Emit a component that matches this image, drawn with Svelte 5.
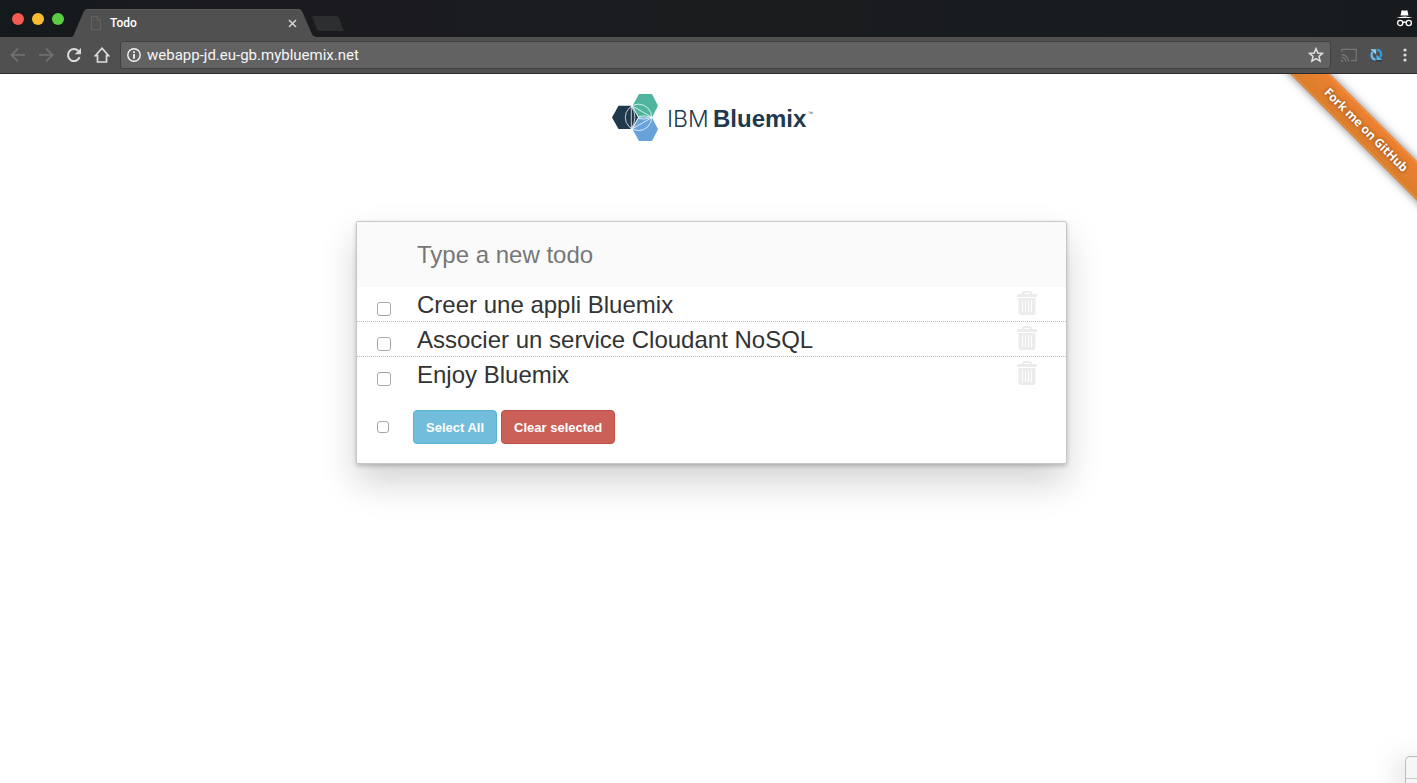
<script>
  let draft = $state('');
  let todos = $state([
    { id: 1, text: 'Creer une appli Bluemix', done: false },
    { id: 2, text: 'Associer un service Cloudant NoSQL', done: false },
    { id: 3, text: 'Enjoy Bluemix', done: false }
  ]);
  let nextId = 4;

  function add(event) {
    event.preventDefault();
    if (!draft.trim()) return;
    todos.push({ id: nextId++, text: draft.trim(), done: false });
    draft = '';
  }
  function remove(id) {
    todos = todos.filter((t) => t.id !== id);
  }
  function setAll(value) {
    todos.forEach((t) => (t.done = value));
  }
  function clearSelected() {
    todos = todos.filter((t) => !t.done);
  }
</script>

<div class="browser">
  <header class="titlebar">
    <div class="lights">
      <button class="light close" aria-label="Close window"></button>
      <button class="light minimise" aria-label="Minimise window"></button>
      <button class="light expand" aria-label="Zoom window"></button>
    </div>
    <div class="tab">
      <svg class="tab-shape" viewBox="0 0 244 28" preserveAspectRatio="none" aria-hidden="true">
        <path d="M0 28C2 28 2 26 3 24L12 3Q13 0 15 0H226Q229 0 230 3L239 24C240 26 241 28 244 28Z" fill="#505050" />
        <path d="M0 28C2 28 2 26 3 24L12 3Q13 .5 15 .5H226Q229 .5 230 3L239 24C240 26 241 28 244 28" fill="none" stroke="#606060" stroke-width=".6" />
      </svg>
      <svg class="page-icon" viewBox="0 0 10 14" aria-hidden="true">
        <path d="M.5.5H6L9.500 4V13.500H.5ZM6 .5V4H9.500" fill="none" stroke="#636363" />
      </svg>
      <span class="tab-title">Todo</span>
      <button class="tab-close" aria-label="Close tab">
        <svg viewBox="0 0 9 9" aria-hidden="true"><path d="M1 1L8 8M8 1L1 8" stroke="#d4d4d4" stroke-width="1.500" /></svg>
      </button>
    </div>
    <button class="new-tab" aria-label="New tab">
      <svg viewBox="0 0 32 15" aria-hidden="true"><path d="M1 0H24Q26 0 27 2L32 15H8Q6 15 5 13L0 1Z" fill="#2d2e30" /></svg>
    </button>
    <svg class="incognito" viewBox="0 0 17 18" aria-hidden="true">
      <path d="M4.500 5.500L5.500.8Q5.700 0 6.500.3L8.500.8 10.500.3Q11.300 0 11.500.8L12.500 5.500ZM.2 8Q8.500 5 16.800 8Z" fill="#fff" />
      <g fill="none" stroke="#fff" stroke-width="1.300">
        <circle cx="4.200" cy="13" r="2.600" />
        <circle cx="12.800" cy="13" r="2.600" />
        <path d="M6.800 12.600Q8.500 11.400 10.200 12.600" />
      </g>
    </svg>
  </header>

  <nav class="toolbar" aria-label="Browser">
    <button class="tool" aria-label="Back">
      <svg viewBox="0 0 16 16" aria-hidden="true"><path d="M15 8H2M8 1.500L1.500 8 8 14.500" fill="none" stroke="#737373" stroke-width="1.700" /></svg>
    </button>
    <button class="tool" aria-label="Forward">
      <svg viewBox="0 0 16 16" aria-hidden="true"><path d="M1 8H14M8 1.500L14.500 8 8 14.500" fill="none" stroke="#737373" stroke-width="1.700" /></svg>
    </button>
    <button class="tool" aria-label="Reload">
      <svg viewBox="0 0 16 16" aria-hidden="true">
        <path d="M13.600 10.200A6 6 0 1 1 12.300 3.900" fill="none" stroke="#dcdcdc" stroke-width="2" />
        <path d="M15 1V7.200H8.800Z" fill="#dcdcdc" />
      </svg>
    </button>
    <button class="tool" aria-label="Home">
      <svg viewBox="0 0 16 16" aria-hidden="true"><path d="M8 1.200L1.400 8.700H3.500V15H12.500V8.700H14.600Z" fill="none" stroke="#dcdcdc" stroke-width="1.700" /></svg>
    </button>
    <div class="omnibox">
      <svg class="info" viewBox="0 0 14 14" aria-hidden="true">
        <circle cx="7" cy="7" r="6.200" fill="none" stroke="#f4f4f4" stroke-width="1.400" />
        <path d="M6.100 6H7.900V10.700H6.100ZM6.100 3.200H7.900V4.900H6.100Z" fill="#f4f4f4" />
      </svg>
      <input class="address" type="text" aria-label="Address" value="webapp-jd.eu-gb.mybluemix.net" />
      <button class="star" aria-label="Bookmark this page">
        <svg viewBox="0 0 14 14" aria-hidden="true"><path d="M7 1.400L8.600 5.200 12.800 5.500 9.600 8.200 10.600 12.300 7 10.100 3.400 12.300 4.400 8.200 1.200 5.500 5.400 5.200Z" fill="none" stroke="#e2e2e2" stroke-width="1.300" /></svg>
      </button>
    </div>
    <button class="tool" aria-label="Cast">
      <svg viewBox="0 0 16 14" aria-hidden="true">
        <path d="M.8 4V1.300H15.200V12.700H10" fill="none" stroke="#757575" stroke-width="1.300" />
        <path d="M.5 6.500A7 7 0 0 1 7.500 13.500M.5 9.300A4.200 4.200 0 0 1 4.700 13.500" fill="none" stroke="#757575" stroke-width="1.300" />
        <path d="M0 11.500A2.300 2.300 0 0 1 2.300 13.800H0Z" fill="#757575" />
      </svg>
    </button>
    <button class="tool sync" aria-label="Sync extension">
      <svg viewBox="0 0 14 14" aria-hidden="true">
        <ellipse cx="8" cy="12.700" rx="5" ry=".9" fill="#363d43" />
        <path d="M6.500 11.800C2.800 10.800 1.300 7.200 3.500 4" fill="none" stroke="#62bdf0" stroke-width="2.300" />
        <path d="M1.300 1.300H7.200V6.500Q4.500 4.800 1.300 1.300Z" fill="#86cdf5" />
        <path d="M8.200 1.700C12 2.500 13.200 6 11.200 9.300" fill="none" stroke="#2f9be0" stroke-width="2.300" />
        <path d="M13 12H7.500V7Q10 8.500 13 12Z" fill="#4db6ef" />
      </svg>
    </button>
    <button class="tool menu" aria-label="Menu">
      <svg viewBox="0 0 4 14" aria-hidden="true"><g fill="#dcdcdc"><circle cx="2" cy="2" r="1.600" /><circle cx="2" cy="7" r="1.600" /><circle cx="2" cy="12" r="1.600" /></g></svg>
    </button>
  </nav>

  <main class="page">
    <div class="ribbon-corner">
      <a class="ribbon" href="#fork"><span>Fork me on GitHub</span></a>
    </div>

    <svg class="logo" viewBox="0 0 200 47" role="img" aria-label="IBM Bluemix">
      <path d="M27 0H40L46 11.700 40 23.400H27L20.500 11.700Z" fill="#4fb59f" />
      <path d="M27 23.400H40L46 35.200 40 47H27L20.500 35.200Z" fill="#68a2da" />
      <path d="M6.500 11.700H19.500L26 23.400 19.500 35H6.500L0 23.400Z" fill="#20384c" />
      <g fill="none" stroke="#fff" stroke-opacity=".75" stroke-width="1">
        <circle cx="26.500" cy="23.400" r="13.200" />
        <path d="M19.300 11.800V35M19.300 11.800Q26.500 23.400 19.300 35" />
        <path d="M20.300 12L39.600 23M26.500 22.500Q33 21 39.600 23.400" />
        <path d="M20.300 34.800L39.600 23.800M26.500 24.500Q33 26 39.600 23.400" />
      </g>
      <text class="mark-light" x="55" y="33">IBM</text>
      <text class="mark-bold" x="101" y="33">Bluemix</text>
      <text class="mark-tm" x="196" y="21">™</text>
    </svg>

    <section class="card" aria-label="Todos">
      <form onsubmit={add}>
        <input class="new-todo" type="text" aria-label="New todo" placeholder="Type a new todo" bind:value={draft} />
      </form>
      <ul>
        {#each todos as todo (todo.id)}
          <li>
            <input class="tick" type="checkbox" id="todo-{todo.id}" bind:checked={todo.done} />
            <label for="todo-{todo.id}">{todo.text}</label>
            <button class="trash" aria-label="Delete {todo.text}" onclick={() => remove(todo.id)}>
              <svg viewBox="0 0 20 24" aria-hidden="true">
                <path d="M6 4V2.500Q6 1 7.500 1H12.500Q14 1 14 2.500V4" fill="none" stroke="#ececec" stroke-width="2" />
                <rect x="0" y="3" width="20" height="3" rx="1" fill="#ececec" />
                <path d="M1.500 7H18.500V21.500Q18.500 24 16 24H4Q1.500 24 1.500 21.500Z" fill="#ececec" />
                <path d="M5.500 9.500V21M8.500 9.500V21M11.500 9.500V21M14.500 9.500V21" stroke="#fff" />
              </svg>
            </button>
          </li>
        {/each}
      </ul>
      <footer>
        <input class="tick small" type="checkbox" aria-label="Toggle all" onchange={(e) => setAll(e.currentTarget.checked)} />
        <button class="btn info-btn" onclick={() => setAll(true)}>Select All</button>
        <button class="btn danger-btn" onclick={clearSelected}>Clear selected</button>
      </footer>
    </section>

    <div class="corner-panel" aria-hidden="true"></div>
  </main>
</div>

<style>
  :global(body) {
    margin: 0;
    background: #fff;
  }
  * {
    box-sizing: border-box;
  }
  button {
    padding: 0;
    border: 0;
    background: none;
    font: inherit;
    cursor: pointer;
  }
  svg {
    display: block;
  }
  .browser {
    min-height: 100vh;
    display: flex;
    flex-direction: column;
    font-family: 'Liberation Sans', Arial, sans-serif;
  }
  .titlebar {
    height: 37px;
    display: flex;
    align-items: flex-end;
    background: linear-gradient(90deg, #14191b, #1b1b1f 15%, #191c1e 70%, #171b1e);
  }
  .lights {
    display: flex;
    gap: 8px;
    padding: 0 8px 12px 12px;
  }
  .light {
    width: 12px;
    height: 12px;
    border-radius: 50%;
  }
  .close {
    background: #f25a52;
  }
  .minimise {
    background: #fbbd2f;
  }
  .expand {
    background: #5bcb42;
  }
  .tab {
    position: relative;
    width: 244px;
    height: 28px;
    display: flex;
    align-items: center;
    padding: 0 19px;
    color: #fff;
    font: 500 12px Roboto, sans-serif;
  }
  .tab-shape {
    position: absolute;
    inset: 0;
    width: 100%;
    height: 100%;
  }
  .page-icon,
  .tab-title,
  .tab-close {
    position: relative;
  }
  .page-icon {
    width: 10px;
    height: 14px;
  }
  .tab-title {
    flex: 1;
    padding-left: 9px;
  }
  .tab-close svg {
    width: 9px;
    height: 9px;
  }
  .new-tab {
    margin: 0 auto 6px -4px;
  }
  .new-tab svg {
    width: 32px;
    height: 15px;
  }
  .incognito {
    width: 17px;
    height: 18px;
    margin: 0 4px 9px 0;
  }
  .toolbar {
    height: 37px;
    display: flex;
    align-items: center;
    gap: 12px;
    padding: 0 10px;
    background: #505050;
    border-bottom: 1px solid #2b2b2b;
  }
  .tool svg {
    width: 16px;
    height: 16px;
  }
  .omnibox {
    flex: 1;
    min-width: 0;
    height: 28px;
    display: flex;
    align-items: center;
    gap: 6px;
    margin: 0 -2px;
    padding: 0 6px;
    border: 1px solid #404040;
    border-radius: 3px;
    background: #626262;
  }
  .info {
    width: 14px;
    height: 14px;
  }
  .star svg {
    width: 16px;
    height: 16px;
  }
  .address {
    flex: 1;
    min-width: 0;
    padding: 0;
    border: 0;
    outline: 0;
    background: none;
    color: #f5f5f5;
    font: 15px Roboto, sans-serif;
  }
  .sync svg {
    width: 14px;
    height: 14px;
  }
  .menu {
    margin-left: 8px;
  }
  .menu svg {
    width: 4px;
    height: 14px;
  }
  .page {
    position: relative;
    flex: 1;
    overflow: hidden;
    padding: 20px 0 40px 6px;
  }
  .logo {
    width: 200px;
    height: 47px;
    margin: 0 auto 80px;
    overflow: visible;
  }
  .logo text {
    fill: #20394e;
  }
  .logo .mark-light {
    font: 300 23px Inter, sans-serif;
  }
  .logo .mark-bold {
    font: bold 24px 'Liberation Sans', sans-serif;
  }
  .logo .mark-tm {
    font: 5px 'Liberation Sans', sans-serif;
  }
  .card {
    width: 100%;
    max-width: 711px;
    margin: 0 auto;
    border: 1px solid #c6c6c6;
    border-radius: 2px;
    background: #fff;
    box-shadow: 0 2px 4px rgba(0, 0, 0, 0.2), 0 18px 36px rgba(0, 0, 0, 0.18);
  }
  .new-todo {
    display: block;
    width: 100%;
    height: 65px;
    padding: 0 60px;
    border: 0;
    outline: 0;
    background: #fafafa;
    color: #333;
    font: 24px 'Liberation Sans', Arial, sans-serif;
  }
  .new-todo::placeholder {
    color: #777;
  }
  ul {
    margin: 0;
    padding: 0;
    list-style: none;
  }
  li {
    min-height: 35px;
    display: flex;
    align-items: flex-start;
    padding: 0 29px 0 20px;
    border-bottom: 1px dotted #bbb;
  }
  li:last-child {
    border-bottom-color: transparent;
  }
  li label {
    flex: 1;
    padding: 1px 0 0 26px;
    margin-bottom: -1px;
    color: #333;
    font-size: 24px;
    line-height: 34px;
  }
  .tick {
    appearance: none;
    flex: none;
    width: 14px;
    height: 14px;
    margin: 15px 0 0;
    border: 1px solid #a6a6a6;
    border-radius: 3px;
    background: #fff;
  }
  .tick:checked {
    background: #4a90e2;
  }
  .tick.small {
    width: 12px;
    height: 12px;
    margin: 0 20px 0 0;
  }
  .trash {
    margin-top: 4px;
  }
  .trash svg {
    width: 20px;
    height: 24px;
  }
  footer {
    display: flex;
    align-items: center;
    gap: 4px;
    padding: 18px 20px 19px;
  }
  .btn {
    height: 34px;
    padding: 0 12px;
    border: 1px solid;
    border-radius: 4px;
    color: #fff;
    font-size: 13px;
    font-weight: bold;
  }
  .info-btn {
    background: #72bcdc;
    border-color: #5bb2d6;
  }
  .danger-btn {
    background: #cb6058;
    border-color: #c04f46;
  }
  .ribbon-corner {
    position: absolute;
    top: 0;
    right: 0;
    width: 150px;
    height: 150px;
    overflow: hidden;
  }
  .ribbon {
    position: absolute;
    left: -21px;
    top: 42px;
    width: 240px;
    height: 28px;
    padding: 1px 0;
    transform: rotate(45deg);
    background: linear-gradient(#ee8031, #d97e2c);
    box-shadow: 0 0 8px rgba(0, 0, 0, 0.5);
    color: #fff;
    font: bold 12px 'Noto Sans', sans-serif;
    text-decoration: none;
    text-shadow: 0 0 4px rgba(80, 30, 0, 0.7);
  }
  .ribbon span {
    display: block;
    text-align: center;
    border: dotted #f5ab5a;
    border-width: 1px 0;
    line-height: 24px;
  }
  .corner-panel {
    position: absolute;
    right: 0;
    bottom: 0;
    width: 12px;
    height: 27px;
    border: 1px solid #bdbdbd;
    border-width: 1px 0 0 1px;
    border-radius: 5px 0 0 0;
    background: linear-gradient(#f6f6f6 21px, #ccc 21px, #ccc 22px, #f6f6f6 22px);
    box-shadow: 0 6px 30px rgba(0, 0, 0, 0.35);
  }
</style>
